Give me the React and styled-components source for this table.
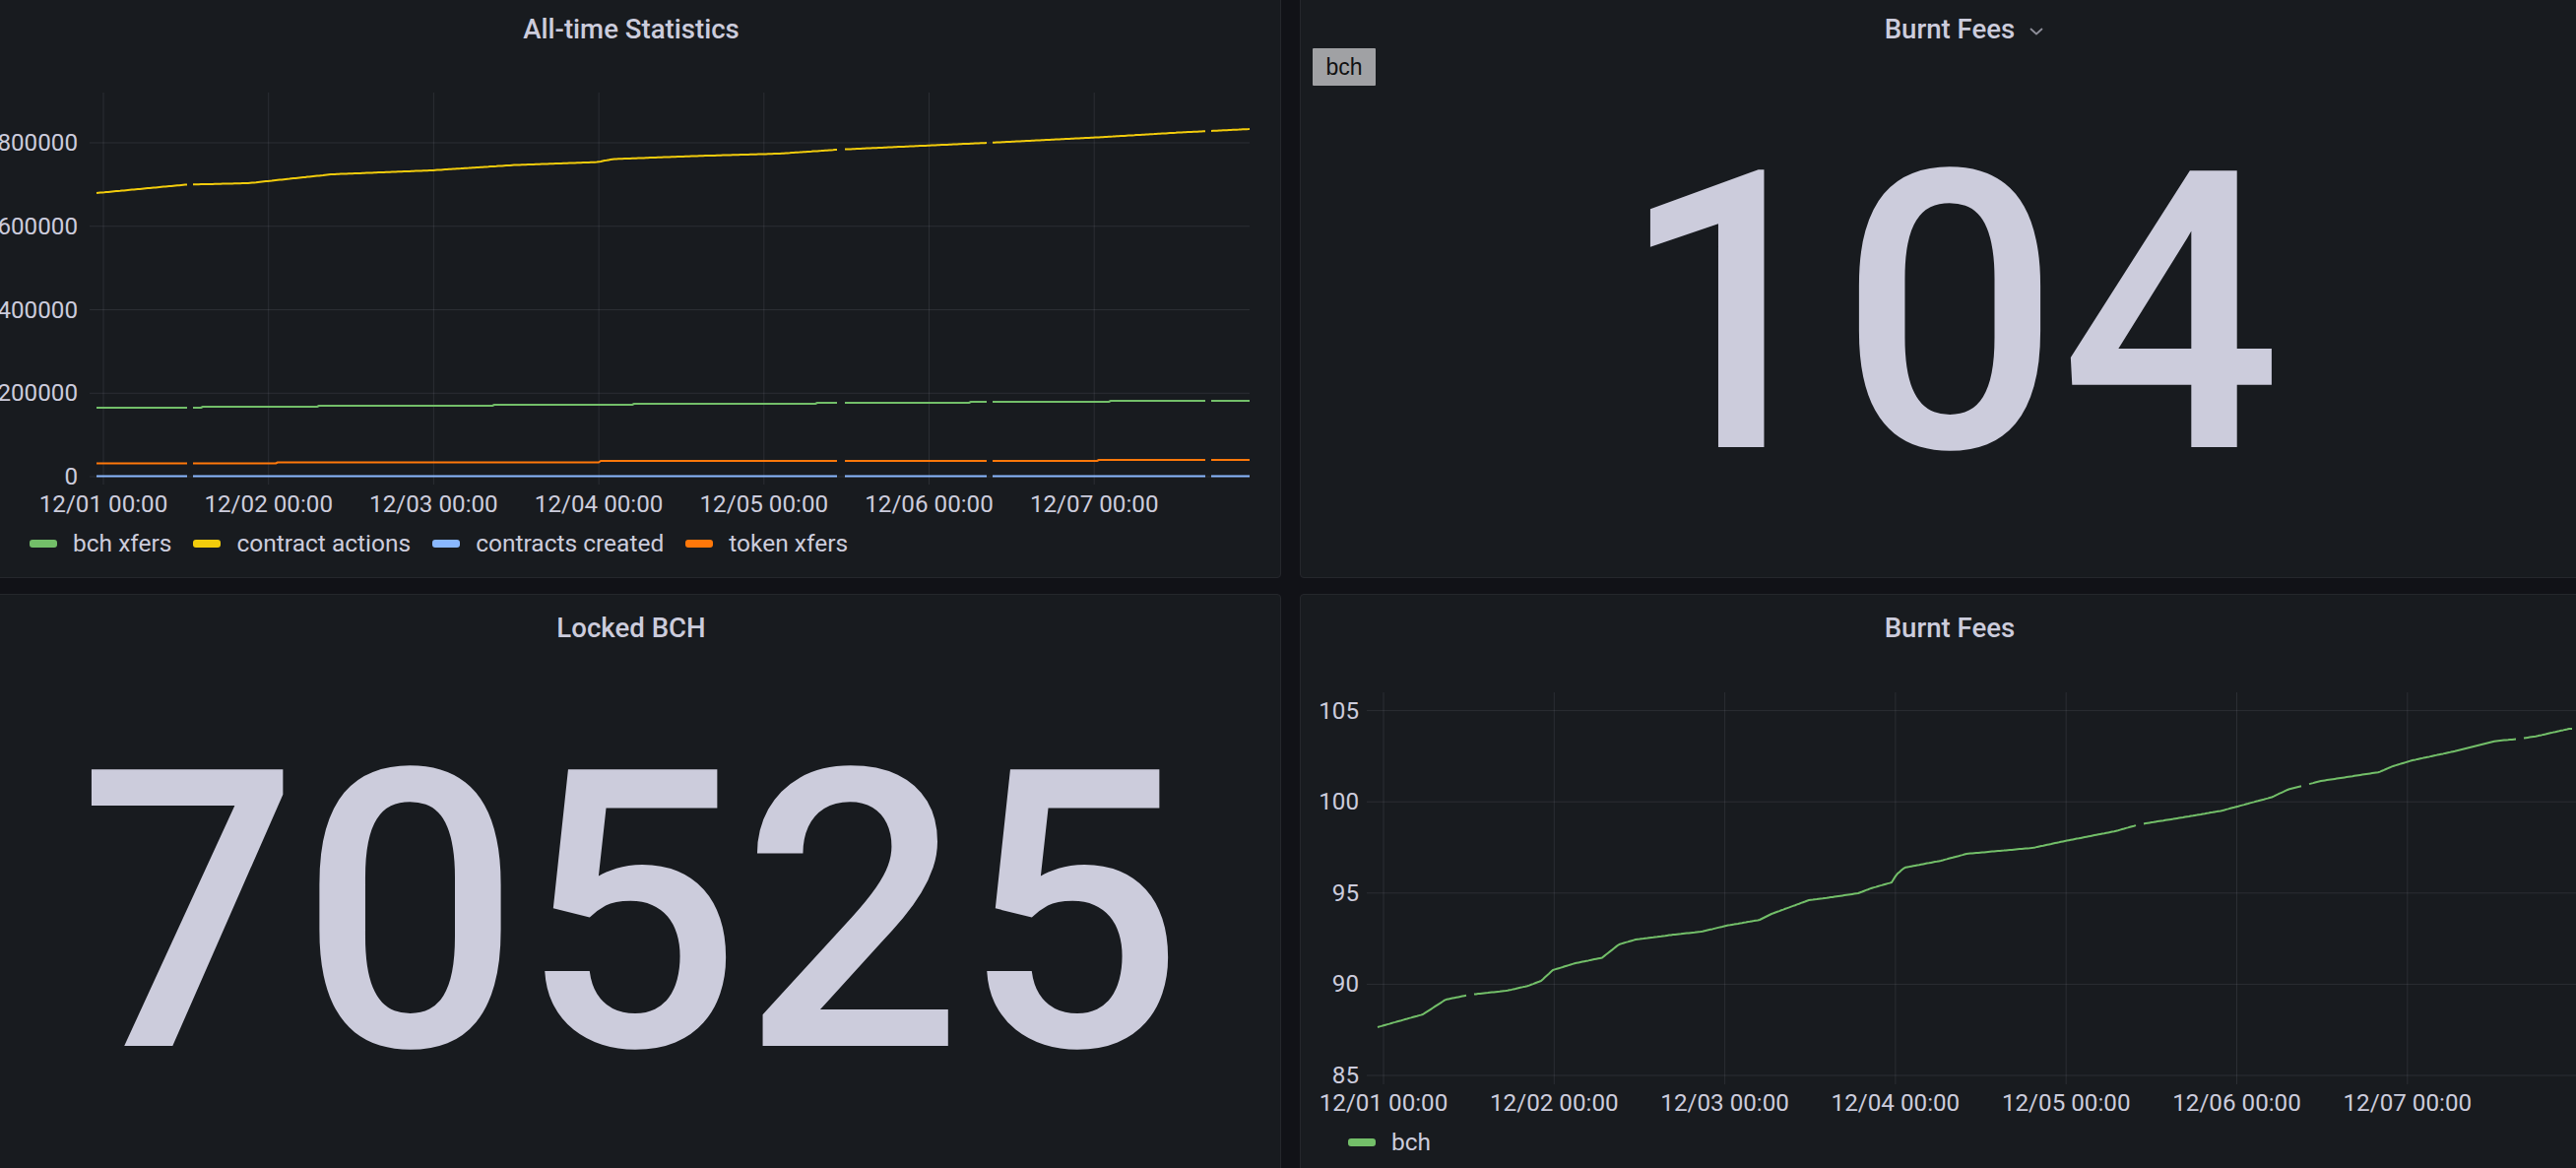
import React from 'react';
import styled, { createGlobalStyle } from 'styled-components';

const GlobalStyle = createGlobalStyle`
  html, body { margin: 0; padding: 0; background: #111217; overflow: hidden; }
  body { font-family: Roboto, "Liberation Sans", sans-serif; color: #ccccdc; }
`;

const Dashboard = styled.div`
  display: grid;
  grid-template-columns: 1320px 1320px;
  grid-template-rows: 592px 592px;
  column-gap: 19px;
  row-gap: 16px;
  margin: -5px 0 0 -19px;
  width: 2659px;
`;

const Panel = styled.section`
  position: relative;
  display: flex;
  flex-direction: column;
  background: #181b1f;
  border: 1px solid #25272c;
  border-radius: 4px;
  overflow: hidden;
`;

const Header = styled.header`
  height: 68px;
  flex: none;
  display: flex;
  align-items: center;
  justify-content: center;
`;

const Title = styled.h2`
  position: relative;
  margin: 0;
  font: 500 27.6px/1 Roboto, "Liberation Sans", sans-serif;
  color: #ccccdc;
  white-space: nowrap;
`;

const Chevron = styled.svg`
  position: absolute;
  left: calc(100% + 15px);
  top: calc(50% - 2px);
  width: 14px;
  height: 8px;
`;

const StatBody = styled.div`
  flex: 1;
  display: flex;
  align-items: center;
  justify-content: center;
  padding-bottom: 12px;
`;

const StatValue = styled.div`
  font: 500 395px/1 Roboto, "Liberation Sans", sans-serif;
  color: #ccccdc;
  white-space: nowrap;
`;

const SeriesBadge = styled.div`
  position: absolute;
  left: 12px;
  top: 53px;
  width: 64px;
  height: 38px;
  display: flex;
  align-items: center;
  justify-content: center;
  background: #a0a1a4;
  color: #111;
  font: 400 23px/1 "Liberation Sans", Arial, sans-serif;
  border-radius: 1px;
`;

const ChartSvg = styled.svg`
  display: block;
  flex: none;
  width: 1318px;
  height: 468px;
`;

const AxisText = styled.text`
  font-family: Roboto, "Liberation Sans", sans-serif;
  font-size: 24.2px;
  fill: #ccccdc;
`;

const Legend = styled.div`
  flex: none;
  height: 40px;
  display: flex;
  align-items: center;
  gap: 22px;
  padding-left: ${(p) => p.$pad}px;
`;

const LegendItem = styled.div`
  display: flex;
  align-items: center;
  gap: 16px;
  font: 400 24.5px/1 Roboto, "Liberation Sans", sans-serif;
  color: #ccccdc;
  white-space: nowrap;
`;

const Swatch = styled.span`
  width: 28px;
  height: 8px;
  border-radius: 3px;
  background: ${(p) => p.$color};
`;

const GRID = 'rgba(204,204,220,0.11)';
const GREEN = '#73bf69';
const YELLOW = '#f2cc0c';
const BLUE = '#8ab8ff';
const ORANGE = '#ff780a';

const interp = (pts) => (x) => {
  if (x <= pts[0][0]) return pts[0][1];
  for (let i = 1; i < pts.length; i++) {
    const [x0, y0] = pts[i - 1];
    const [x1, y1] = pts[i];
    if (x <= x1) return y0 + ((y1 - y0) * (x - x0)) / (x1 - x0);
  }
  return pts[pts.length - 1][1];
};

const steps = (pts) => (x) => {
  let y = pts[0][1];
  for (const [px, py] of pts) if (px <= x) y = py;
  return y;
};

const buildPath = (fn, x0, x1, gaps, step = 2) => {
  let d = '';
  let pen = false;
  const xs = [];
  for (let x = x0; x < x1; x += step) xs.push(x);
  xs.push(x1);
  for (const x of xs) {
    if (gaps.some(([a, b]) => x >= a && x <= b)) {
      pen = false;
      continue;
    }
    d += `${pen ? 'L' : 'M'}${x.toFixed(1)} ${fn(x).toFixed(1)}`;
    pen = true;
  }
  return d;
};

const DAYS = ['12/01', '12/02', '12/03', '12/04', '12/05', '12/06', '12/07'];

/* ---------- All-time Statistics chart (screen coords) ---------- */
const statY = (v) => 484 - (v / 200000) * 84.75;
const statGaps = [[191, 195], [852, 856], [1003, 1007], [1225, 1229]];
const statSeries = [
  {
    color: YELLOW,
    fn: interp([
      [98, 196], [189, 187.5], [252, 186], [337, 177], [438, 173], [522, 167.6],
      [606, 164.6], [623, 161.5], [707, 158.4], [791, 156], [850, 152],
      [926, 148.5], [1010, 144.7], [1111, 139.7], [1195, 134.7], [1269, 131],
    ]),
  },
  {
    color: GREEN,
    fn: steps([[98, 414], [206, 413], [324, 412], [501, 411], [644, 410], [829, 409], [985, 408], [1128, 407]]),
  },
  {
    color: ORANGE,
    fn: steps([[98, 470.5], [282, 469.5], [610, 468], [1115, 467]]),
  },
  { color: BLUE, fn: () => 483.5 },
];

function StatisticsChart() {
  const xs = DAYS.map((_, i) => 105 + i * 167.7);
  const ys = [800000, 600000, 400000, 200000, 0];
  return (
    <ChartSvg viewBox="0 0 1318 468">
      <g transform="translate(18,-64)">
        {ys.map((v) => (
          <line key={v} x1={91} x2={1269} y1={statY(v)} y2={statY(v)} stroke={GRID} strokeWidth={1} />
        ))}
        {xs.map((x) => (
          <line key={x} x1={x} x2={x} y1={94} y2={492} stroke={GRID} strokeWidth={1} />
        ))}
        {ys.map((v) => (
          <AxisText key={v} x={79} y={statY(v)} textAnchor="end" dominantBaseline="central">
            {v}
          </AxisText>
        ))}
        {xs.map((x, i) => (
          <AxisText key={x} x={x} y={512} textAnchor="middle" dominantBaseline="central">
            {DAYS[i]} 00:00
          </AxisText>
        ))}
        {statSeries.map((s) => (
          <path
            key={s.color}
            d={buildPath(s.fn, 98, 1269, statGaps)}
            fill="none"
            stroke={s.color}
            strokeWidth={2}
            strokeLinejoin="round"
          />
        ))}
      </g>
    </ChartSvg>
  );
}

/* ---------- Burnt Fees chart (screen coords) ---------- */
const feeY = (v) => 1092 - ((v - 85) / 5) * 92.6;
const feeGaps = [[1491, 1495], [2171, 2175], [2339, 2343], [2557, 2561]];
const feeFn = interp([
  [1399, 1043], [1420, 1037], [1445, 1030], [1468, 1015], [1493, 1010], [1530, 1006], [1552, 1001],
  [1565, 996], [1577, 985], [1600, 978], [1627, 972.5], [1644, 959], [1661, 954],
  [1700, 949], [1728, 946], [1753, 940], [1787, 934], [1799, 928], [1837, 914],
  [1860, 911], [1887, 907], [1900, 902], [1921, 896], [1926, 888], [1934, 881], [1971, 874],
  [1997, 867], [2030, 864], [2064, 861], [2097, 854], [2148, 844], [2173, 837],
  [2223, 829], [2257, 823], [2307, 809.5], [2324, 801.5], [2357, 793], [2390, 788],
  [2416, 784], [2430, 778], [2450, 772], [2492, 763], [2534, 752.5], [2560, 750], [2576, 747.5], [2609, 740],
]);

function FeesChart() {
  const xs = DAYS.map((_, i) => 1405 + i * 173.3);
  const ys = [105, 100, 95, 90, 85];
  return (
    <ChartSvg viewBox="0 0 1318 468">
      <g transform="translate(-1321,-672)">
        {ys.map((v) => (
          <line key={v} x1={1388} x2={2640} y1={feeY(v)} y2={feeY(v)} stroke={GRID} strokeWidth={1} />
        ))}
        {xs.map((x) => (
          <line key={x} x1={x} x2={x} y1={703} y2={1101} stroke={GRID} strokeWidth={1} />
        ))}
        {ys.map((v) => (
          <AxisText key={v} x={1380} y={feeY(v)} textAnchor="end" dominantBaseline="central">
            {v}
          </AxisText>
        ))}
        {xs.map((x, i) => (
          <AxisText key={x} x={x} y={1120} textAnchor="middle" dominantBaseline="central">
            {DAYS[i]} 00:00
          </AxisText>
        ))}
        <path d={buildPath(feeFn, 1399, 2612, feeGaps)} fill="none" stroke={GREEN} strokeWidth={2} strokeLinejoin="round" />
      </g>
    </ChartSvg>
  );
}

export default function App() {
  return (
    <>
      <GlobalStyle />
      <Dashboard>
        <Panel>
          <Header>
            <Title>All-time Statistics</Title>
          </Header>
          <StatisticsChart />
          <Legend $pad={48}>
            <LegendItem><Swatch $color={GREEN} />bch xfers</LegendItem>
            <LegendItem><Swatch $color={YELLOW} />contract actions</LegendItem>
            <LegendItem><Swatch $color={BLUE} />contracts created</LegendItem>
            <LegendItem><Swatch $color={ORANGE} />token xfers</LegendItem>
          </Legend>
        </Panel>

        <Panel>
          <Header>
            <Title>
              Burnt Fees
              <Chevron viewBox="0 0 14 8">
                <polyline points="1.5,1.5 7,6.5 12.5,1.5" fill="none" stroke="#8e8e99" strokeWidth="1.8" strokeLinecap="round" strokeLinejoin="round" />
              </Chevron>
            </Title>
          </Header>
          <SeriesBadge>bch</SeriesBadge>
          <StatBody>
            <StatValue>104</StatValue>
          </StatBody>
        </Panel>

        <Panel>
          <Header>
            <Title>Locked BCH</Title>
          </Header>
          <StatBody>
            <StatValue>70525</StatValue>
          </StatBody>
        </Panel>

        <Panel>
          <Header>
            <Title>Burnt Fees</Title>
          </Header>
          <FeesChart />
          <Legend $pad={48}>
            <LegendItem><Swatch $color={GREEN} />bch</LegendItem>
          </Legend>
        </Panel>
      </Dashboard>
    </>
  );
}
